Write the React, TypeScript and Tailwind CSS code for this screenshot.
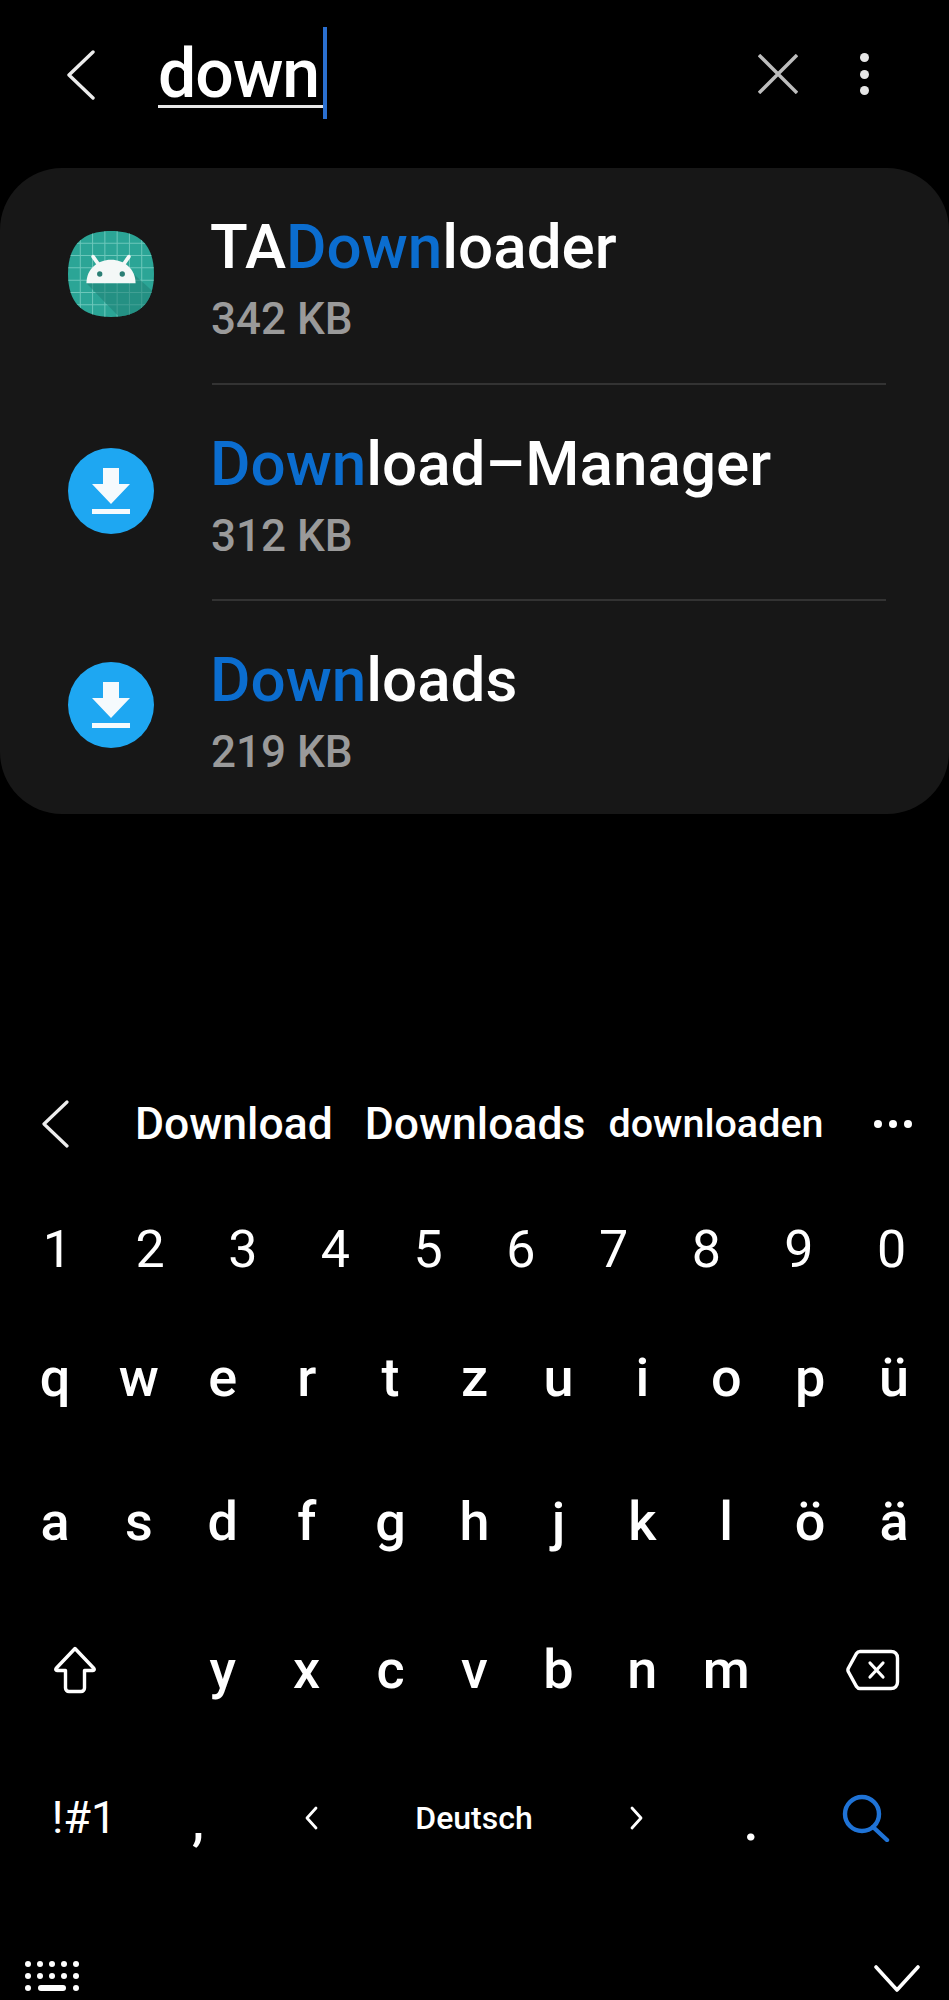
import React from "react";

const BLUE = "text-[#0b6dcf]";

function AndroidIcon() {
  const lines = [12, 24, 36, 48, 60, 72];
  return (
    <svg width="86" height="86" viewBox="0 0 84 84">
      <defs>
        <clipPath id="sq">
          <path d="M42 0C70 0 84 14 84 42C84 70 70 84 42 84C14 84 0 70 0 42C0 14 14 0 42 0Z" />
        </clipPath>
      </defs>
      <g clipPath="url(#sq)">
        <rect width="84" height="84" fill="#2ba596" />
        {lines.map((l) => (
          <g key={l} stroke="#6cc7ba" strokeWidth="1">
            <line x1={l} y1="0" x2={l} y2="84" />
            <line x1="0" y1={l} x2="84" y2={l} />
          </g>
        ))}
        <path d="M18 51L50 84H84V60L62 40V51Z" fill="#1f7f74" opacity="0.55" />
      </g>
      <path d="M18 51C18 37 29 28 42 28C55 28 66 37 66 51Z" fill="#f4f8f7" />
      <path d="M30 33L24.5 25M54 33L59.5 25" stroke="#f4f8f7" strokeWidth="3.6" strokeLinecap="round" />
      <circle cx="31" cy="42" r="2.6" fill="#2b7f75" />
      <circle cx="53" cy="42" r="2.6" fill="#2b7f75" />
    </svg>
  );
}

function DownloadIcon() {
  return (
    <svg width="86" height="86" viewBox="0 0 86 86">
      <circle cx="43" cy="43" r="43" fill="#1ea7f2" />
      <path d="M35 20H51V36H62L43 56L24 36H35Z" fill="#f5fafd" />
      <rect x="24" y="61" width="38" height="5" fill="#f5fafd" />
    </svg>
  );
}

function Row({
  icon,
  title,
  size,
  heightClass,
  divider,
}: {
  icon: React.ReactNode;
  title: React.ReactNode;
  size: string;
  heightClass: string;
  divider?: boolean;
}) {
  return (
    <div className={`flex items-center ${heightClass}`}>
      <div className="ml-[68px] -mt-[5px] flex w-[86px] shrink-0 items-center justify-center">{icon}</div>
      <div className={`ml-[58px] mr-[63px] flex h-full flex-1 flex-col pt-[42px] ${divider ? "border-b-2 border-[#333333]" : ""}`}>
        <div className="-ml-[2px] text-[62px] leading-[74px] font-medium text-white">{title}</div>
        <div className="-ml-[1px] mt-[9px] text-[44px] leading-[52px] font-medium text-[#9a9a9a]">{size}</div>
      </div>
    </div>
  );
}

function KeyRow({ keys, className }: { keys: string[]; className: string }) {
  return (
    <div className={className}>
      {keys.map((k) => (
        <div key={k} className="text-center">
          {k}
        </div>
      ))}
    </div>
  );
}

export default function App() {
  return (
    <div className="relative h-[2000px] w-[949px] overflow-hidden bg-black font-['Roboto',sans-serif] text-white">
      {/* Search bar */}
      <div className="flex h-[168px] items-start">
        <svg className="ml-[66px] mt-[50px]" width="30" height="50" viewBox="0 0 30 50">
          <path d="M27 2L3 25L27 48" fill="none" stroke="#ececec" strokeWidth="3.4" strokeLinecap="round" strokeLinejoin="round" />
        </svg>
        <div className="relative ml-[62px] mt-[27px] h-[92px] w-[168px]">
          <div className="h-[81px] border-b-[3px] border-[#e8e8e8] pt-[10px] text-[68px] leading-[74px] font-medium tracking-[-1px] text-white">down</div>
          <div className="absolute left-[165px] top-0 h-[92px] w-[4px] bg-[#2a6fd0]" />
        </div>
        <svg className="ml-[432px] mt-[54px]" width="40" height="40" viewBox="0 0 40 40">
          <path d="M1 1L39 39M39 1L1 39" stroke="#bdbdbd" strokeWidth="3.4" />
        </svg>
        <div className="ml-[62px] mt-[53px] flex h-[42px] flex-col justify-between">
          <div className="size-[9px] rounded-full bg-[#e6e6e6]" />
          <div className="size-[9px] rounded-full bg-[#e6e6e6]" />
          <div className="size-[9px] rounded-full bg-[#e6e6e6]" />
        </div>
      </div>

      {/* Results */}
      <div className="h-[646px] rounded-[62px] bg-[#171717]">
        <Row
          icon={<AndroidIcon />}
          heightClass="h-[217px]"
          title={
            <>
              TA<span className={BLUE}>Down</span>loader
            </>
          }
          size="342 KB"
          divider
        />
        <Row
          icon={<DownloadIcon />}
          heightClass="h-[216px]"
          title={
            <>
              <span className={BLUE}>Down</span>load–Manager
            </>
          }
          size="312 KB"
          divider
        />
        <Row
          icon={<DownloadIcon />}
          heightClass="h-[213px]"
          title={
            <>
              <span className={BLUE}>Down</span>loads
            </>
          }
          size="219 KB"
        />
      </div>

      {/* Keyboard */}
      <div className="mt-[280px]">
        <div className="flex h-[60px] items-center text-[44.5px] font-medium">
          <svg className="ml-[41px]" width="28" height="48" viewBox="0 0 28 48">
            <path d="M26 2L3 24L26 46" fill="none" stroke="#eeeeee" strokeWidth="3.2" strokeLinecap="round" strokeLinejoin="round" />
          </svg>
          <span className="ml-[66px]">Download</span>
          <span className="ml-[32px]">Downloads</span>
          <span className="ml-[23px] text-[39.5px]">downloaden</span>
          <div className="ml-[50px] flex gap-[7px]">
            <div className="size-[8px] rounded-full bg-white" />
            <div className="size-[8px] rounded-full bg-white" />
            <div className="size-[8px] rounded-full bg-white" />
          </div>
        </div>

        <KeyRow
          keys={["1", "2", "3", "4", "5", "6", "7", "8", "9", "0"]}
          className="mt-[68px] grid grid-cols-10 px-[11px] text-[52px] leading-[56px]"
        />
        <KeyRow
          keys={["q", "w", "e", "r", "t", "z", "u", "i", "o", "p", "ü"]}
          className="mt-[70px] grid grid-cols-11 px-[13px] text-[54px] leading-[60px] font-medium"
        />
        <KeyRow
          keys={["a", "s", "d", "f", "g", "h", "j", "k", "l", "ö", "ä"]}
          className="mt-[84px] grid grid-cols-11 px-[13px] text-[54px] leading-[60px] font-medium"
        />

        <div className="mt-[88px] grid grid-cols-11 items-center px-[13px] text-[54px] leading-[60px] font-medium">
          <div className="col-span-2 pl-[40px]">
            <svg width="44" height="48" viewBox="0 0 44 48">
              <path
                d="M22 2.5L41 22.5C41.6 23.2 41.2 24.5 40 24.5H31.5V42C31.5 44 30 45.5 28 45.5H16C14 45.5 12.5 44 12.5 42V24.5H4C2.8 24.5 2.4 23.2 3 22.5Z"
                fill="none"
                stroke="#ffffff"
                strokeWidth="3.4"
                strokeLinejoin="round"
              />
            </svg>
          </div>
          {["y", "x", "c", "v", "b", "n", "m"].map((k) => (
            <div key={k} className="text-center">
              {k}
            </div>
          ))}
          <div className="col-span-2 flex justify-end pr-[36px]">
            <svg width="54" height="42" viewBox="0 0 54 42">
              <path
                d="M14 2.5H45C49 2.5 51.5 5 51.5 9V33C51.5 37 49 39.5 45 39.5H14C12.5 39.5 11.5 39 10.5 37.5L2.5 23C1.7 21.7 1.7 20.3 2.5 19L10.5 4.5C11.5 3 12.5 2.5 14 2.5Z"
                fill="none"
                stroke="#ffffff"
                strokeWidth="3.4"
              />
              <path d="M24 14L37 28M37 14L24 28" stroke="#ffffff" strokeWidth="3.2" strokeLinecap="round" />
            </svg>
          </div>
        </div>

        <div className="mt-[88px] flex h-[60px] items-center font-medium">
          <div className="w-[168px] text-center text-[45px] font-normal">!#1</div>
          <div className="w-[60px] pt-[6px] text-center text-[54px] leading-[60px]">,</div>
          <div className="ml-[42px] flex w-[408px] items-center justify-between px-[34px] text-[32px]">
            <svg width="14" height="24" viewBox="0 0 14 24">
              <path d="M12 2L3 12L12 22" fill="none" stroke="#fff" strokeWidth="2.8" strokeLinecap="round" strokeLinejoin="round" />
            </svg>
            <span>Deutsch</span>
            <svg width="14" height="24" viewBox="0 0 14 24">
              <path d="M2 2L11 12L2 22" fill="none" stroke="#fff" strokeWidth="2.8" strokeLinecap="round" strokeLinejoin="round" />
            </svg>
          </div>
          <div className="ml-[42px] w-[62px] pt-[8px] text-center text-[54px] leading-[60px]">.</div>
          <div className="flex w-[167px] justify-center">
            <svg width="48" height="48" viewBox="0 0 48 48">
              <circle cx="20" cy="20" r="17" fill="none" stroke="#1f73d6" strokeWidth="4.4" />
              <path d="M31 33L45 46" stroke="#1f73d6" strokeWidth="4.4" strokeLinecap="round" />
            </svg>
          </div>
        </div>

        <div className="mt-[110px] flex items-start justify-between pl-[25px] pr-[29px]">
          <div className="flex w-[54px] flex-col gap-[6px] pt-[3px]">
            {[0, 1].map((r) => (
              <div key={r} className="flex justify-between">
                {[0, 1, 2, 3, 4].map((c) => (
                  <div key={c} className="h-[6px] w-[6px] rounded-full bg-white" />
                ))}
              </div>
            ))}
            <div className="flex justify-between">
              <div className="h-[6px] w-[6px] rounded-full bg-white" />
              <div className="h-[6px] w-[28px] rounded-full bg-white" />
              <div className="h-[6px] w-[6px] rounded-full bg-white" />
            </div>
          </div>
          <svg className="mt-[7px]" width="46" height="28" viewBox="0 0 46 28">
            <path d="M2 2L23 25L44 2" fill="none" stroke="#ffffff" strokeWidth="3.6" strokeLinecap="round" strokeLinejoin="round" />
          </svg>
        </div>
      </div>
    </div>
  );
}
